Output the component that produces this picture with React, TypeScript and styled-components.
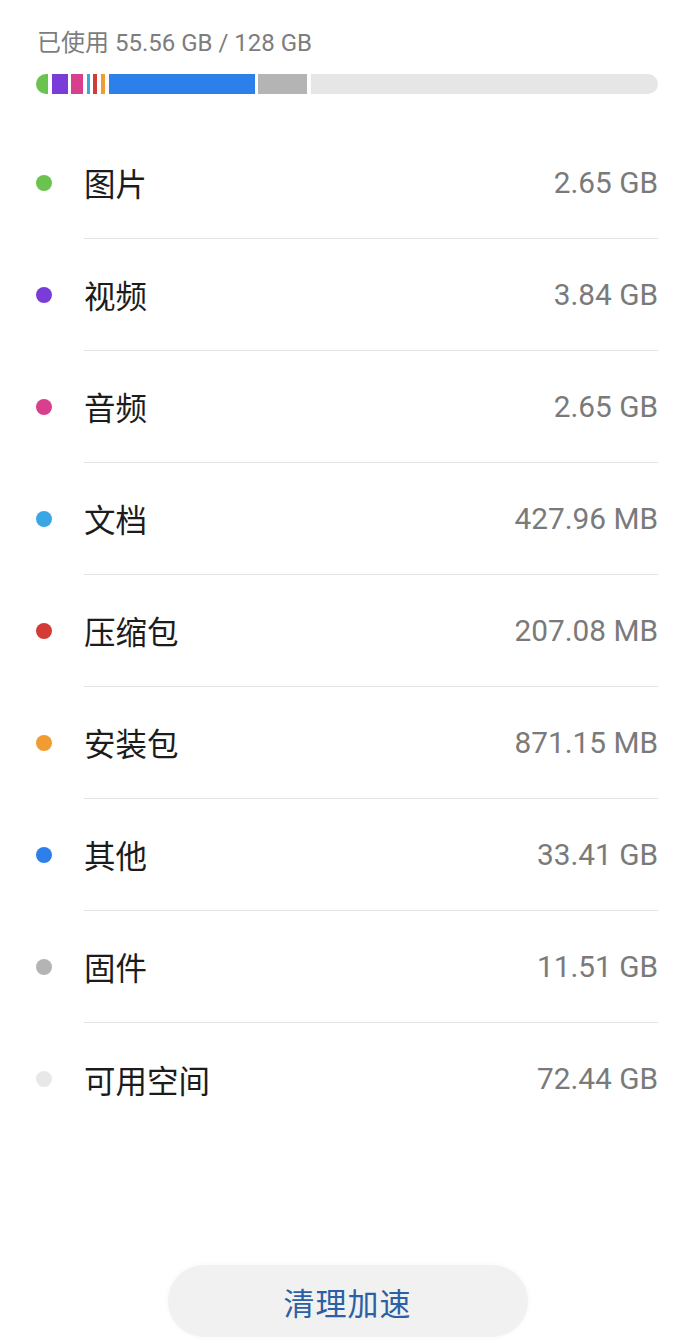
import React from "react";
import styled, { createGlobalStyle } from "styled-components";

const Global = createGlobalStyle`
  html, body { margin: 0; padding: 0; background: #ffffff; }
  body { font-family: Roboto, "Noto Sans CJK SC", sans-serif; }
`;

const Page = styled.div`
  width: 692px;
  height: 1344px;
  display: flex;
  flex-direction: column;
  box-sizing: border-box;
  background: #fff;
  overflow: hidden;
`;

const Summary = styled.div`
  padding: 28px 34px 0 37px;
  font-family: Roboto, "Noto Sans CJK SC", sans-serif;
  font-size: 24px;
  line-height: 30px;
  color: #7d7d7d;
`;

const Bar = styled.div`
  display: flex;
  gap: 3.6px;
  height: 20px;
  margin: 16px 34px 0 36px;
`;

const Segment = styled.div<{ $color: string; $w?: number; $grow?: boolean; $round?: "left" | "right" }>`
  background: ${(p) => p.$color};
  width: ${(p) => (p.$w ? `${p.$w}px` : "auto")};
  flex: ${(p) => (p.$grow ? "1 1 auto" : "0 0 auto")};
  border-radius: ${(p) =>
    p.$round === "left" ? "10px 0 0 10px" : p.$round === "right" ? "0 10px 10px 0" : "0"};
`;

const List = styled.div`
  margin-top: 33px;
  display: flex;
  flex-direction: column;
`;

const Row = styled.div`
  display: flex;
  align-items: center;
  height: 112px;
  padding: 0 34px 0 36px;
  box-sizing: border-box;
`;

const Dot = styled.span<{ $color: string }>`
  width: 16px;
  height: 16px;
  border-radius: 50%;
  background: ${(p) => p.$color};
  flex: 0 0 auto;
`;

const Body = styled.div<{ $last?: boolean }>`
  flex: 1;
  margin-left: 32px;
  height: 100%;
  display: flex;
  align-items: center;
  justify-content: space-between;
  box-sizing: border-box;
  border-bottom: ${(p) => (p.$last ? "none" : "1px solid #e4e4e4")};
  padding-bottom: 1px;
`;

const Label = styled.span`
  font-family: "Noto Sans CJK SC", sans-serif;
  font-size: 31.5px;
  color: #1c1c1c;
`;

const Value = styled.span`
  font-family: Roboto, sans-serif;
  font-size: 29.8px;
  color: #7a7a7a;
`;

const Spacer = styled.div`
  flex: 1;
`;

const Footer = styled.div`
  display: flex;
  justify-content: center;
  padding: 0 0 7px 3px;
`;

const CleanButton = styled.button`
  width: 360px;
  height: 72px;
  border: none;
  border-radius: 36px;
  background: #f1f1f1;
  box-shadow: 0 0 6px rgba(0, 0, 0, 0.04);
  font-family: "Noto Sans CJK SC", sans-serif;
  font-size: 31px;
  color: #2c5fa3;
  letter-spacing: 1px;
  cursor: pointer;
`;

const items = [
  { name: "图片", value: "2.65 GB", color: "#6cc24f" },
  { name: "视频", value: "3.84 GB", color: "#7a3bd9" },
  { name: "音频", value: "2.65 GB", color: "#d83f8e" },
  { name: "文档", value: "427.96 MB", color: "#3ba6e6" },
  { name: "压缩包", value: "207.08 MB", color: "#d43b36" },
  { name: "安装包", value: "871.15 MB", color: "#f09c33" },
  { name: "其他", value: "33.41 GB", color: "#2d7fea" },
  { name: "固件", value: "11.51 GB", color: "#b4b4b4" },
  { name: "可用空间", value: "72.44 GB", color: "#e8e8e8" },
];

export default function App() {
  return (
    <Page>
      <Global />
      <Summary>已使用 55.56 GB / 128 GB</Summary>
      <Bar>
        <Segment $color="#6cc24f" $w={12} $round="left" />
        <Segment $color="#7a3bd9" $w={16} />
        <Segment $color="#d83f8e" $w={12} />
        <Segment $color="#3ba6e6" $w={3} />
        <Segment $color="#d43b36" $w={4} />
        <Segment $color="#f09c33" $w={4} />
        <Segment $color="#2d7fea" $w={146} />
        <Segment $color="#b4b4b4" $w={49} />
        <Segment $color="#e6e6e6" $grow $round="right" />
      </Bar>
      <List>
        {items.map((it, i) => (
          <Row key={it.name}>
            <Dot $color={it.color} />
            <Body $last={i === items.length - 1}>
              <Label>{it.name}</Label>
              <Value>{it.value}</Value>
            </Body>
          </Row>
        ))}
      </List>
      <Spacer />
      <Footer>
        <CleanButton>清理加速</CleanButton>
      </Footer>
    </Page>
  );
}
